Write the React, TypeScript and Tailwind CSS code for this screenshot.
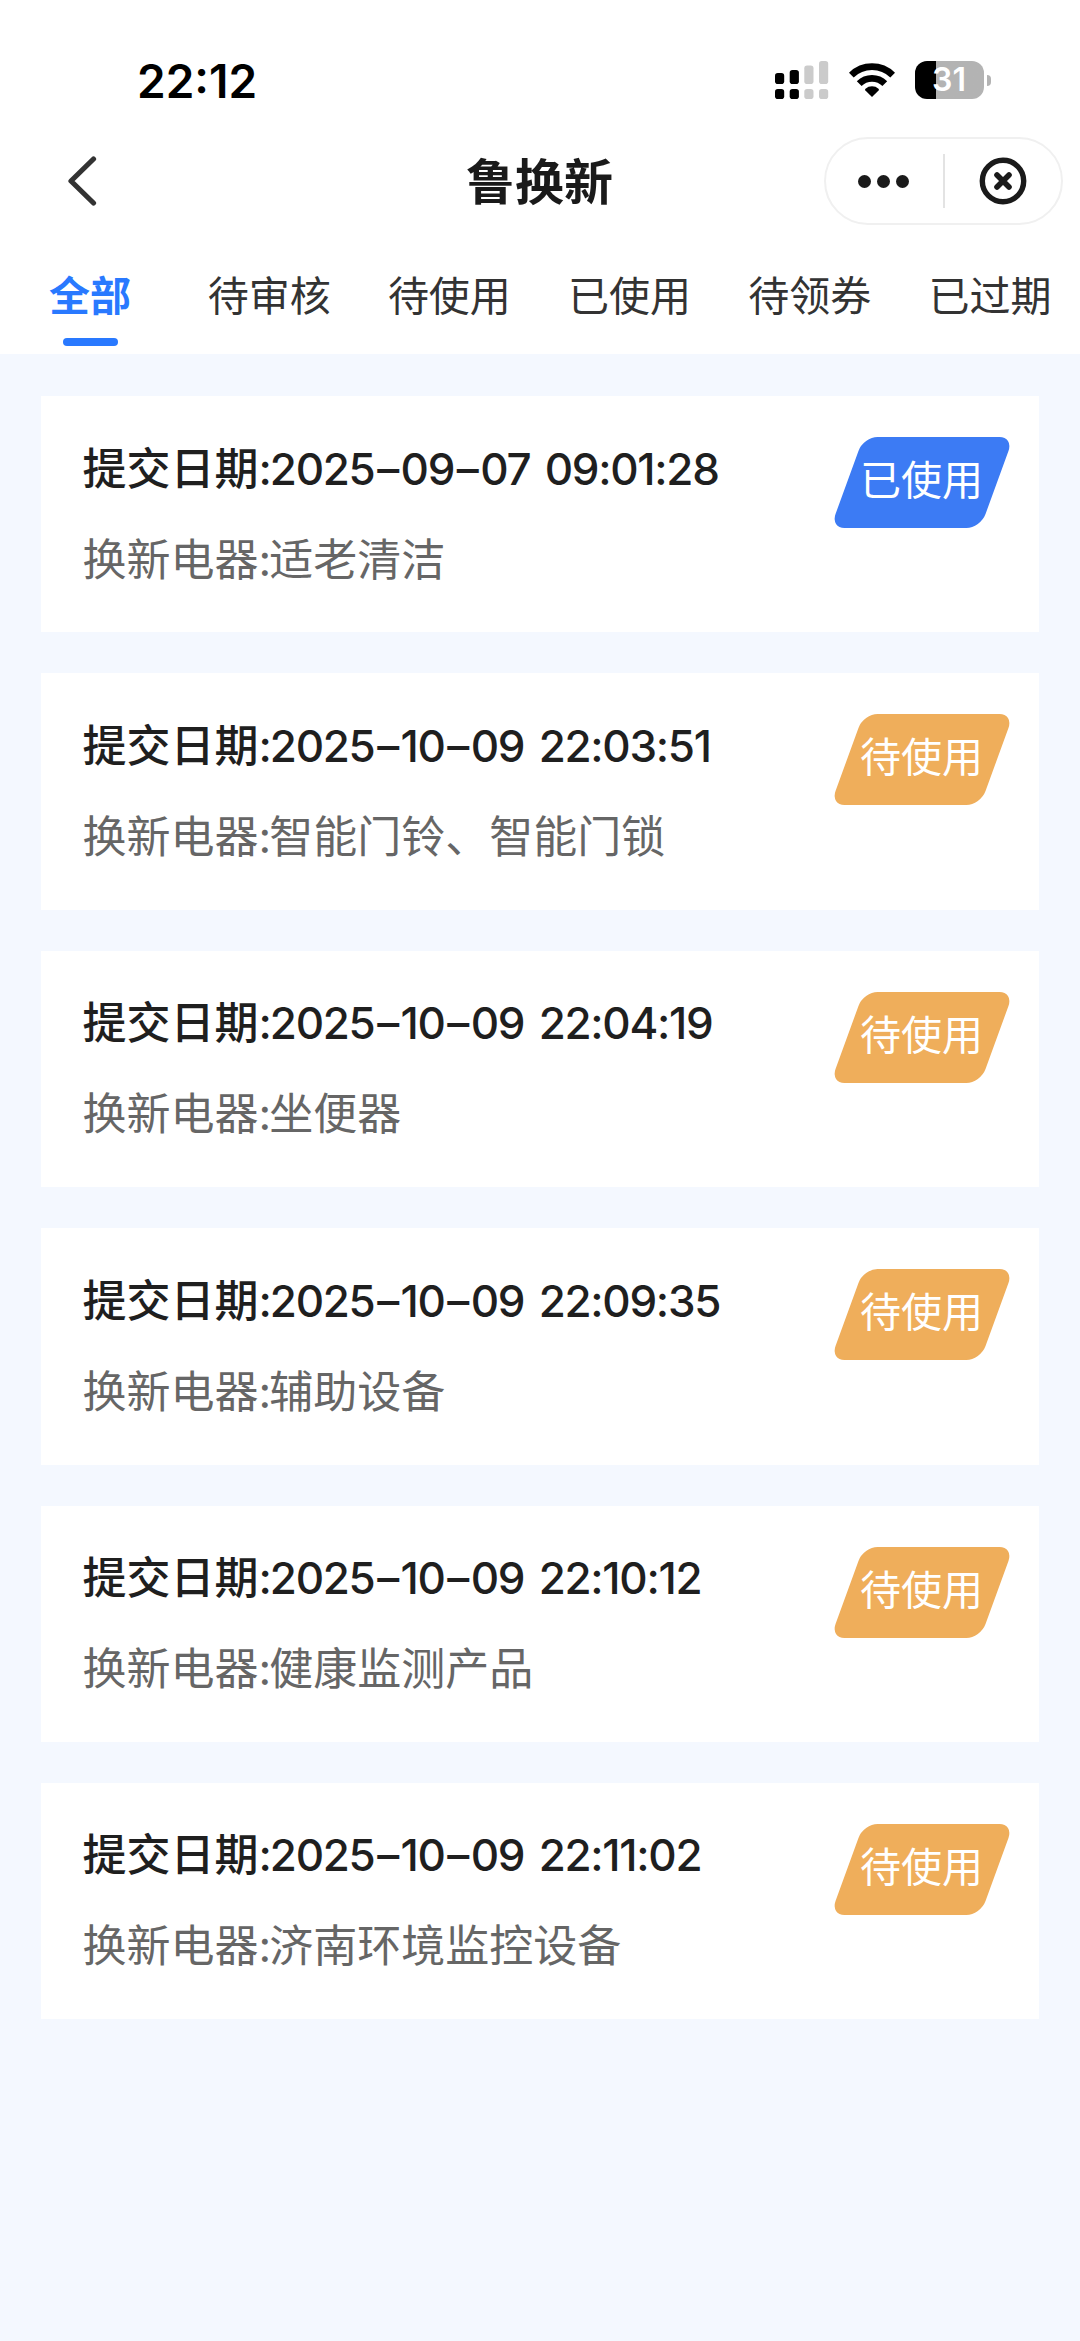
import { useState } from "react";

const tabs = ["全部", "待审核", "待使用", "已使用", "待领券", "已过期"];

const records = [
  { id: 1, date: "2025–09–07", time: "09:01:28", item: "适老清洁", status: "已使用" },
  { id: 2, date: "2025–10–09", time: "22:03:51", item: "智能门铃、智能门锁", status: "待使用" },
  { id: 3, date: "2025–10–09", time: "22:04:19", item: "坐便器", status: "待使用" },
  { id: 4, date: "2025–10–09", time: "22:09:35", item: "辅助设备", status: "待使用" },
  { id: 5, date: "2025–10–09", time: "22:10:12", item: "健康监测产品", status: "待使用" },
  { id: 6, date: "2025–10–09", time: "22:11:02", item: "济南环境监控设备", status: "待使用" },
];

function StatusBar() {
  return (
    <div className="flex h-[110px] items-end justify-between pl-[137px] pr-[89.5px]">
      <div className="h-[58px] text-[46px] leading-[58px] font-semibold text-black">22:12</div>
      <div className="flex h-[50px] items-start">
        <svg width="54" height="38" viewBox="0 0 54 38" className="mt-[1px] mr-[20px]">
          <g fill="#000">
            <rect x="0" y="12" width="9.2" height="11" rx="2.8" />
            <rect x="14.7" y="9" width="9.2" height="14" rx="2.8" />
            <rect x="0" y="28" width="9.2" height="10" rx="2.8" />
            <rect x="14.7" y="28" width="9.2" height="10" rx="2.8" />
          </g>
          <g fill="#cbcbcb">
            <rect x="29.3" y="4.5" width="9.2" height="18.5" rx="2.8" />
            <rect x="44" y="0" width="9.2" height="23" rx="2.8" />
            <rect x="29.3" y="28" width="9.2" height="10" rx="2.8" />
            <rect x="44" y="28" width="9.2" height="10" rx="2.8" />
          </g>
        </svg>
        <svg width="46" height="34" viewBox="0 0 46 34" className="mt-[3px] mr-[20px]">
          <g fill="none" stroke="#000" strokeWidth="6.8">
            <path d="M2.3 12.2a29.5 29.5 0 0 1 41.4 0" />
            <path d="M10.2 20.6a18.3 18.3 0 0 1 25.6 0" />
          </g>
          <path d="M23 34l-6.6-6.6a1.2 1.2 0 0 1 .1-1.7a10 10 0 0 1 13 0a1.2 1.2 0 0 1 .1 1.7z" />
        </svg>
        <div className="mt-[1px] flex items-center gap-[3px]">
          <div className="flex h-[38px] w-[69px] items-center justify-center rounded-[12px] bg-linear-to-r from-black from-[31%] to-[#b3b3b3] to-[31%] text-[32px] leading-none font-semibold text-white">
            31
          </div>
          <div className="h-[11px] w-[4px] rounded-r-full bg-[#b3b3b3]" />
        </div>
      </div>
    </div>
  );
}

function NavBar() {
  return (
    <div className="grid h-[142px] grid-cols-3 items-center">
      <svg width="30" height="50" viewBox="0 0 30 50" className="ml-[67px]">
        <path d="M26.5 3L4 25l22.5 22" fill="none" stroke="#333" strokeWidth="5.2" strokeLinecap="round" strokeLinejoin="round" />
      </svg>
      <h1 className="pt-[3px] pr-[1px] text-center text-[49px] leading-[60px] font-bold text-[#1a1a1a]">鲁换新</h1>
      <div className="mr-[17px] flex h-[88px] w-[239px] items-center justify-self-end rounded-full border-2 border-[#f0f0f0]">
        <button className="flex w-[117px] items-center justify-center gap-[6px] pr-[2px]">
          <span className="size-[13px] rounded-full bg-[#1a1a1a]" />
          <span className="size-[13px] rounded-full bg-[#1a1a1a]" />
          <span className="size-[13px] rounded-full bg-[#1a1a1a]" />
        </button>
        <span className="h-[54px] w-[2px] bg-[#e3e3e3]" />
        <button className="flex flex-1 justify-center">
          <svg width="48" height="48" viewBox="0 0 48 48" fill="none" stroke="#1a1a1a" strokeLinecap="round">
            <circle cx="24" cy="24" r="20.7" strokeWidth="5.4" />
            <path d="M18 18l12 12M30 18L18 30" strokeWidth="5.6" />
          </svg>
        </button>
      </div>
    </div>
  );
}

function DateText({ date, time }: { date: string; time: string }) {
  const [y, m, d] = date.split("–");
  return (
    <span className="tracking-[-1.3px]">
      {y}
      <span className="mx-[2.7px]">–</span>
      {m}
      <span className="mx-[2.7px]">–</span>
      {d}
      <span className="ml-[4px]"> {time}</span>
    </span>
  );
}

export default function App() {
  const [active, setActive] = useState("全部");

  return (
    <div className="min-h-[2341px] w-[1080px] overflow-hidden bg-[#f4f8ff] font-[Inter,'Noto_Sans_CJK_SC',sans-serif]">
      <header className="h-[354px] bg-white">
        <StatusBar />
        <NavBar />
        <nav className="flex gap-[57.2px] pl-[49px]">
          {tabs.map(t => (
            <button
              key={t}
              onClick={() => setActive(t)}
              className={
                "flex shrink-0 flex-col items-center pt-[14px] text-[41px] leading-[60px] first:mr-[19.5px] " +
                (active === t ? "font-bold text-[#2979ff]" : "text-[#333]")
              }
            >
              {t}
              {active === t && <span className="mt-[12px] h-[8px] w-[55px] rounded-full bg-[#2979ff]" />}
            </button>
          ))}
        </nav>
      </header>

      <main className="flex flex-col gap-[41px] px-[41px] pt-[42px]">
        {records.map(r => (
          <div key={r.id} className="flex h-[236.4px] items-start justify-between bg-white px-[42px]">
            <div className="-ml-[0.5px] pt-[42.5px]">
              <div className="text-[44px] leading-[60px] font-medium whitespace-nowrap text-[#1f1f1f]">
                提交日期<span className="tracking-[-2px]">:</span>
                <DateText date={r.date} time={r.time} />
              </div>
              <div className="mt-[31px] text-[44px] leading-[60px] whitespace-nowrap text-[#666]">
                换新电器<span className="tracking-[-2px]">:</span>
                {r.item}
              </div>
            </div>
            <div
              className={
                "mt-[41px] flex h-[91px] w-[150px] -skew-x-20 justify-center rounded-[14px] " +
                (r.status === "已使用" ? "bg-[#3c7bf4]" : "bg-[#efae5b]")
              }
            >
              <span className="-ml-[2px] skew-x-20 text-[41px] leading-[86px] whitespace-nowrap text-white">{r.status}</span>
            </div>
          </div>
        ))}
      </main>
    </div>
  );
}
